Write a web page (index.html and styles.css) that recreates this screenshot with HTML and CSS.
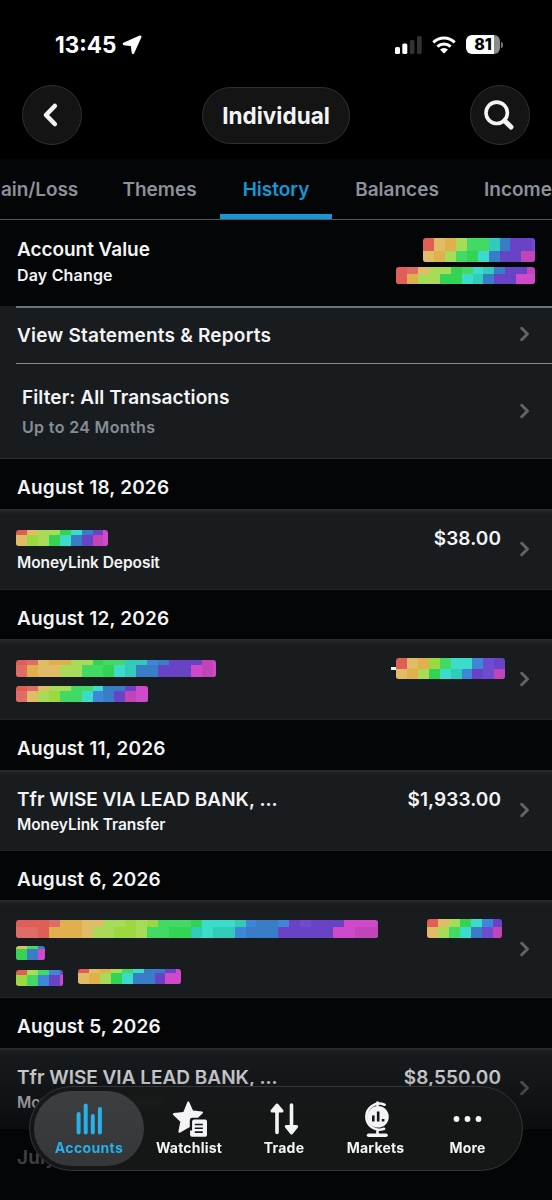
FILE: index.html
```html
<!DOCTYPE html>
<html lang="en">
<head>
<meta charset="utf-8">
<title>Individual – History</title>
<link rel="stylesheet" href="styles.css">
</head>
<body>
<svg class="defs" width="0" height="0"><symbol id="chev" viewBox="0 0 10 16"><path d="M1.7 2.300 7.500 8 1.700 13.700" fill="none" stroke="currentColor" stroke-width="2.900" stroke-linecap="round" stroke-linejoin="round"/></symbol></svg>
<div class="screen">
  <div class="status">
    <div class="clock"><span class="time">13:45</span>
      <svg class="loc" width="20" height="20" viewBox="0 0 20 20"><path d="M2 9 18.200 1.800 11 17.800 10 10Z" fill="#fff" stroke="#fff" stroke-width="2.600" stroke-linejoin="round"/></svg>
    </div>
    <div class="signals">
      <svg width="28" height="18" viewBox="0 0 28 18"><rect x="0" y="11" width="5" height="7" rx="1.5" fill="#fff"/><rect x="7.3" y="7.5" width="5" height="10.5" rx="1.5" fill="#fff"/><rect x="14.8" y="4" width="4.7" height="14" rx="1.5" fill="#323232"/><rect x="22" y="0" width="4.7" height="18" rx="1.5" fill="#323232"/></svg>
      <svg class="wifi" width="24" height="18" viewBox="0 0 24 18"><g fill="none" stroke="#fff" stroke-width="3"><path d="M1.3 6.4a15.5 15.5 0 0 1 21.4 0"/><path d="M5.4 10.7a9.6 9.6 0 0 1 13.2 0"/></g><path d="M8 13.5a6 6 0 0 1 8 0l-3.3 3.5q-.7.6-1.4 0Z" fill="#fff"/></svg>
      <div class="battery"><span>81</span></div><i class="nub"></i>
    </div>
  </div>
  <div class="nav">
    <button class="round"><svg class="back" width="18" height="26" viewBox="0 0 18 26"><path d="M13.800 4 5 13 13.800 22" fill="none" stroke="#f4f4f4" stroke-width="4.600" stroke-linecap="round" stroke-linejoin="round"/></svg></button>
    <div class="title">Individual</div>
    <button class="round"><svg class="search" width="32" height="32" viewBox="0 0 32 32"><g fill="none" stroke="#f4f4f4" stroke-linecap="round"><circle cx="13.7" cy="13.8" r="10.7" stroke-width="3.6"/><path d="M21.5 21.7 28 28" stroke-width="5"/></g></svg></button>
  </div>
  <div class="tabs">
    <span class="tab t1">ain/Loss</span><span class="tab t2">Themes</span><span class="tab t3 on">History</span><span class="tab t4">Balances</span><span class="tab t5">Income</span>
  </div>
  <div class="account">
    <div><div class="h">Account Value</div><div class="s">Day Change</div></div>
    <div class="values">
      <div class="mosaic" data-size="112,24,12.5" data-top="roOyggCBVVv" data-bottom="oOygGcBVVMM"></div>
      <div class="mosaic" data-size="139.5,17.7,6.7" data-top="rRoyyGgcCBVVM" data-bottom="rOyyGGcCBVVmm"></div>
    </div>
  </div>
  <div class="link view"><span class="h">View Statements &amp; Reports</span><svg class="chev"><use href="#chev"/></svg></div>
  <div class="link filter"><div><div class="h">Filter: All Transactions</div><div class="months">Up to 24 Months</div></div><svg class="chev"><use href="#chev"/></svg></div>

  <div class="date">August 18, 2026</div>
  <div class="row">
    <div class="left"><div class="mosaic m1" data-size="92.5,16,5.3" data-top="royyGcBVm" data-bottom="oYyGcBVMm"></div><div class="s">MoneyLink Deposit</div></div>
    <div class="amount">$38.00</div><svg class="chev"><use href="#chev"/></svg>
  </div>
  <div class="date">August 12, 2026</div>
  <div class="row">
    <div class="left"><div class="mosaic m1" data-size="200.5,16.7,5" data-top="rRoOOyyGggCCbBVVVMm" data-bottom="ROooyyggGcCBBVVVmMm"></div><div class="mosaic m2" data-size="132.7,16,5" data-top="rRoyyggcBBVmm" data-bottom="RoyYggcbBVMmm"></div></div>
    <div class="minus"><i></i><div class="mosaic" data-size="109.3,21.7,10.7" data-top="roOYgccbvV" data-bottom="oOyGcCbVvM"></div></div><svg class="chev"><use href="#chev"/></svg>
  </div>
  <div class="date">August 11, 2026</div>
  <div class="row">
    <div class="left"><div class="h tfr">Tfr WISE VIA LEAD BANK, ...</div><div class="s">MoneyLink Transfer</div></div>
    <div class="amount">$1,933.00</div><svg class="chev"><use href="#chev"/></svg>
  </div>
  <div class="date">August 6, 2026</div>
  <div class="row tall">
    <div class="left">
      <div class="mosaic m3" data-size="362.5,18.3,7" data-top="rrrROOooyyYyYgggGcccCbBBbVvVVVmmmM" data-bottom="RRrOOOoyyYYyggGGCcCCbBBBVVVVVmmMMM"></div>
      <div class="mosaic m4" data-size="29.8,14,2.7" data-top="ogB" data-bottom="GBm"></div>
      <div class="pair"><div class="mosaic m5" data-size="47.3,16,4.7" data-top="rygbv" data-bottom="YgbVm"></div><div class="mosaic" data-size="103,15,3.7" data-top="roOygcBBVm" data-bottom="oOyGcBBVmm"></div></div>
    </div>
    <div class="mosaic m6" data-size="75.4,19.5,8.3" data-top="royGcbV" data-bottom="oygcBvM"></div><svg class="chev"><use href="#chev"/></svg>
  </div>
  <div class="date">August 5, 2026</div>
  <div class="row">
    <div class="left"><div class="h tfr">Tfr WISE VIA LEAD BANK, ...</div><div class="s">MoneyLink Transfer</div></div>
    <div class="amount">$8,550.00</div><svg class="chev"><use href="#chev"/></svg>
  </div>
  <div class="date">July</div>

  <div class="fade"></div>
  <div class="dock">
    <div class="item active"><svg width="28" height="34" viewBox="0 0 28 34"><path d="M3.6 12v18.5M10.7 3.5v27M17.8 14v16.500M24.900 7v23.500" stroke="#27b0ea" stroke-width="4" stroke-linecap="round"/></svg><span>Accounts</span></div>
    <div class="item i2"><svg width="36" height="36" viewBox="0 0 36 36"><path d="M16.3 1.2q1-1.700 2 0l3.700 8.200 9 1q1.900.6.5 2l-4.500 4.300h-5.500q-2.700 0-2.700 3v6.200l-9.500 5.700q-2 .9-1.900-1.200l1.900-9.600-7-6.700q-1.300-1.500.7-2l9.400-1.200Z" fill="#f4f4f6"/><path d="M23.300 18.500h11q1.700 0 1.700 1.700v13.800q0 1.700-1.700 1.700H21q-1.900 0-1.900-1.900v-4.300h2v-9q0-2 2.200-2Z" fill="#f4f4f6"/><path d="M23.800 23.500h8M23.800 27.300h8M23.800 31.100h8" stroke="#161819" stroke-width="1.600"/></svg><span>Watchlist</span></div>
    <div class="item i3"><svg width="30" height="34" viewBox="0 0 30 34"><g stroke="#f4f4f6" stroke-linecap="round" stroke-linejoin="round"><path d="M8 8v22.500M22.500 3v22" stroke-width="3.600"/><path d="M8 3 3 9h10ZM22.500 31l-5.200-6.500h10.400Z" fill="#f4f4f6" stroke-width="3"/></g></svg><span>Trade</span></div>
    <div class="item i4"><svg width="28" height="36" viewBox="0 0 28 36"><g fill="none" stroke="#f4f4f6" stroke-linecap="round"><path d="M22.500 3.700A13 13 0 1 0 22 27.800" stroke-width="2.600"/><path d="M15.500 29v4.500M15.500 1.500v3" stroke-width="2.600"/><path d="M6.500 34.200h17.500" stroke-width="3.500"/></g><circle cx="16" cy="15.800" r="10.800" fill="#f4f4f6"/><path d="M11.300 14.500v6M16.200 10.500v10M21.100 18v2.500" stroke="#161819" stroke-width="2.600"/></svg><span>Markets</span></div>
    <div class="item i5"><svg width="30" height="34" viewBox="0 0 30 34"><g fill="#f4f4f6"><circle cx="3.500" cy="17" r="2.900"/><circle cx="14.500" cy="17" r="2.900"/><circle cx="25.500" cy="17" r="2.900"/></g></svg><span>More</span></div>
  </div>
</div>
<script src="mosaic.js"></script>
</body>
</html>
```
FILE: styles.css
```css
* { box-sizing: border-box; }
body { margin: 0; background: #040507; color: #f3f4f5; font-family: Inter, "Liberation Sans", sans-serif; font-weight: 590; }
svg { display: block; }
.defs { position: absolute; }
.screen { position: relative; width: 552px; height: 1200px; overflow: hidden; }
.status { height: 85px; background: #000; display: flex; justify-content: space-between; padding: 32px 49px 0 55px; }
.clock { display: flex; height: 25px; align-items: center; gap: 6px; }
.time { font-size: 22.500px; font-weight: 750; color: #fff; }
.signals { display: flex; height: 25px; align-items: center; }
.wifi { margin: 0 10px 0 9px; }
.battery { width: 34px; height: 19px; border-radius: 6px; background: linear-gradient(90deg, #fff 28px, #8b8b8b 28px); color: #000; font-size: 16px; line-height: 19px; font-weight: 800; text-align: center; padding-right: 0; }
.nub { width: 2px; height: 6px; background: #777; border-radius: 0 2px 2px 0; margin-left: 1px; }
.nav { height: 74px; background: #000; display: flex; justify-content: space-between; align-items: flex-start; padding: 0 22px; }
.round { width: 60px; height: 60px; border-radius: 50%; border: 1px solid #303030; background: #141414; padding: 0; display: flex; align-items: center; justify-content: center; }
.back { margin-right: 4px; }
.search { margin-right: 2px; }
.title { width: 148px; height: 57px; margin-top: 2px; border: 1px solid #303030; border-radius: 29px; background: #141414; text-align: center; font-size: 22.500px; line-height: 55px; font-weight: 670; letter-spacing: .02px; }
.tabs { height: 60.500px; border-bottom: 1px solid #55585b; display: flex; white-space: nowrap; color: #8b929a; font-size: 19px; line-height: 62px; }
.tab { height: 60px; text-align: center; }
.t1 { width: 99px; padding-left: 1px; text-align: left; letter-spacing: -.1px; }
.t2 { width: 121px; }
.t3 { width: 112px; }
.t4 { width: 130px; }
.t5 { padding-left: 22px; }
.on { color: #1499d6; border-bottom: 5px solid #1499d6; }
.account { height: 86px; display: flex; justify-content: space-between; padding: 16px 17px 0 17px; }
.h { font-size: 19px; line-height: 26px; white-space: nowrap; letter-spacing: .2px; }
.account .h { letter-spacing: -.05px; line-height: 27px; }
.tfr { letter-spacing: 0; }
.s { font-size: 15.500px; line-height: 25px; white-space: nowrap; letter-spacing: -.06px; }
.account .s { font-size: 16px; line-height: 25px; letter-spacing: .18px; }
.values { display: flex; flex-direction: column; align-items: flex-end; gap: 5px; padding-top: 2px; }
.mosaic svg { border-radius: 3px; }
.link { display: flex; align-items: center; justify-content: space-between; background: #181c1f; padding: 0 22px 0 17px; position: relative; }
.link::before { content: ""; position: absolute; left: 16px; right: 0; top: 0; height: 2px; background: #6b747c; }
.view { height: 57.500px; }
.view .h { padding-top: 3px; }
.filter { height: 96px; padding-left: 22px; border-bottom: 1px solid #2a2d2f; }
.filter > div { padding-top: 2px; }
.filter .h { letter-spacing: .1px; }
.filter::before { height: 1px; background: #888b8e; }
.months { font-size: 16px; line-height: 24px; margin-top: 4px; color: #858e97; letter-spacing: .35px; }
.chev { width: 10px; height: 16px; color: #626568; flex: none; }
.date { height: 49.500px; padding-left: 17px; font-size: 19px; line-height: 57px; letter-spacing: .18px; }
.row { height: 81px; background: linear-gradient(#2b2e31, #1d2124 3px, #181c1f 6px); border-bottom: 1px solid #202426; display: flex; align-items: flex-start; padding: 0 22px 0 17px; }
.row .chev { align-self: center; margin-left: 19px; }
.left { flex: 1; padding-top: 17px; }
.left .s { line-height: 23px; }
.amount { padding-top: 17px; font-size: 19px; line-height: 26px; letter-spacing: .08px; }
.m1 { margin: 4px 0 5px -1.500px; }
.m2 { margin: 9px 0 0 -1.500px; }
.minus { display: flex; align-items: center; padding-top: 18.500px; margin-right: -4px; }
.minus i { width: 5px; height: 2.500px; background: #eee; }
.tall { height: 98px; }
.m3 { margin: 3px 0 8px -1.500px; }
.m4 { margin: 0 0 8.500px -1.500px; }
.pair { display: flex; gap: 15px; margin-left: -1.500px; }
.m5 { padding-top: 1.300px; }
.m6 { padding-top: 18.500px; margin-right: -1px; }
.fade { position: absolute; left: 0; right: 0; top: 1040px; height: 160px; background: linear-gradient(rgba(4,5,7,0), rgba(4,5,7,.22) 24%, rgba(4,5,7,.42) 40%, rgba(4,5,7,.72) 56%, rgba(4,5,7,.76) 78%, rgba(4,5,7,1)); }
.dock { position: absolute; left: 29px; top: 1086px; width: 494px; height: 85px; border: 1px solid #343637; border-radius: 43px; background: rgba(22,24,24,.95); backdrop-filter: blur(3px); display: flex; padding: 4px; }
.item { display: flex; flex-direction: column; align-items: center; padding-top: 10px; font-size: 14px; line-height: 18px; font-weight: 700; letter-spacing: .2px; }
.item svg { height: 36px; }
.item span { margin-top: 2px; }
.i2 { width: 90px; }
.i3 { width: 100px; }
.i4 { width: 83px; }
.i5 { width: 101px; }
.active { width: 110px; height: 75px; border-radius: 38px; background: linear-gradient(#3d3e3f, #353637); color: #27b0ea; }
.active span { letter-spacing: .35px; }
```
FILE: mosaic.js
```javascript
// Draws each redacted value as two rows of coloured cells.
const palette = { r: '#df5f56', R: '#e06c69', o: '#e2bb66', O: '#dfb04c', y: '#a8dc58', Y: '#9cd93f', g: '#42d964', G: '#33d354', c: '#3bdccb', C: '#31cbb9', b: '#3e87d8', B: '#397dc9', v: '#6f4bd0', V: '#6843c5', m: '#cf49ca', M: '#c144b8' };
const cell = 10.93;
document.querySelectorAll('.mosaic').forEach(el => {
  const [w, h, split] = el.dataset.size.split(',').map(Number);
  const row = (s, y, rh) => [...s].map((k, i) => `<rect x="${i * cell}" y="${y}" width="${cell + 1}" height="${rh}" fill="${palette[k]}"/>`).join('');
  el.innerHTML = `<svg width="${w}" height="${h}" viewBox="0 0 ${w} ${h}" shape-rendering="crispEdges">${row(el.dataset.top, 0, h)}${row(el.dataset.bottom, split, h - split)}</svg>`;
});
```
